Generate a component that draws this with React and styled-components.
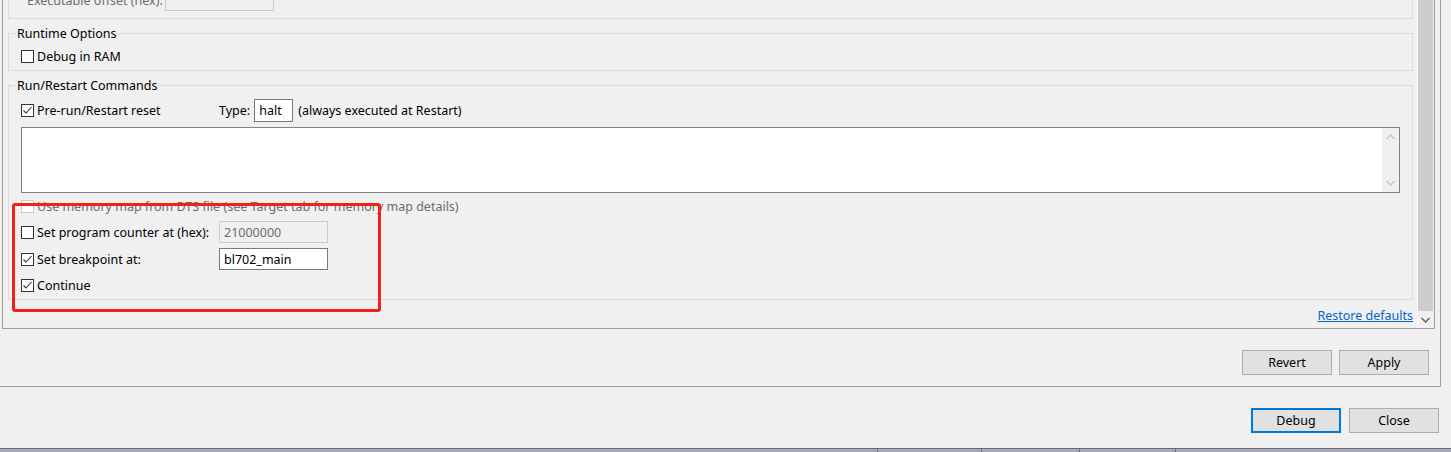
import React from 'react';
import styled, { createGlobalStyle } from 'styled-components';

const GlobalStyle = createGlobalStyle`
  html, body {
    margin: 0;
    padding: 0;
    background: #f0f0f0;
    overflow: hidden;
  }
  body {
    font-family: "Noto Sans", "Open Sans", sans-serif;
    font-size: 12.5px;
    color: #000;
  }
`;

const Page = styled.div`
  position: relative;
  width: 1451px;
  height: 452px;
  display: flex;
  flex-direction: column;
  background: #f0f0f0;
`;

const TabArea = styled.div`
  width: 1441px;
  box-sizing: border-box;
  border-right: 1px solid #a0a0a0;
  border-bottom: 1px solid #a0a0a0;
  padding-bottom: 11px;
`;

const Composite = styled.div`
  margin-left: 2px;
  width: 1433px;
  height: 329px;
  box-sizing: border-box;
  border: 1px solid #a0a0a0;
  border-top: none;
  display: flex;
  overflow: hidden;
`;

// scrolled content: the top of the first group is above the viewport
const Content = styled.div`
  flex: 1;
  min-width: 0;
  margin-top: -11px;
  padding: 0 4px 0 5px;
  display: flex;
  flex-direction: column;
`;

const Group = styled.fieldset`
  margin: 0 0 6px;
  padding: 0;
  min-width: 0;
  border: 1px solid #dcdcdc;
  ${p => p.$cut && 'border-top: none;'}
`;

const Legend = styled.legend`
  margin-left: 7px;
  padding: 0 1px;
  line-height: 16px;
  position: relative;
  top: 1px;
`;

const GroupBody = styled.div`
  padding: ${p => p.$top}px 12px ${p => p.$bottom}px;
  display: flex;
  flex-direction: column;
`;

const Row = styled.div`
  display: flex;
  align-items: center;
  height: ${p => p.$h}px;
  margin-top: ${p => p.$mt || 0}px;
`;

const LabelCell = styled.label`
  display: flex;
  align-items: center;
  gap: 3px;
  width: ${p => p.$w || 198}px;
  flex-shrink: 0;
  padding-left: ${p => p.$indent || 0}px;
  box-sizing: border-box;
  color: ${p => (p.$disabled ? '#6d6d6d' : '#000')};
  white-space: nowrap;
`;

const Box = styled.span`
  width: 13px;
  height: 13px;
  box-sizing: border-box;
  border: 1px solid ${p => (p.$disabled ? '#cccccc' : '#333333')};
  background: #fff;
  display: inline-flex;
  align-items: center;
  justify-content: center;
  flex-shrink: 0;
`;

const TextField = styled.input`
  width: ${p => p.$w}px;
  height: ${p => p.$h}px;
  box-sizing: border-box;
  margin: 0;
  padding: 0 0 0 4px;
  border: 1px solid ${p => (p.$disabled ? '#cccccc' : '#7a7a7a')};
  background: ${p => (p.$disabled ? '#f0f0f0' : '#fff')};
  color: ${p => (p.$disabled ? '#6d6d6d' : '#000')};
  font: inherit;
  outline: none;
`;

const TypeLabel = styled.span`
  margin-right: 4px;
`;

const Note = styled.span`
  margin-left: 5px;
  white-space: nowrap;
`;

const TextArea = styled.div`
  margin-top: 5px;
  height: 66px;
  box-sizing: border-box;
  border: 1px solid #828282;
  background: #fff;
  display: flex;
  justify-content: flex-end;
`;

const AreaScroll = styled.div`
  width: 17px;
  background: #f0f0f0;
  display: flex;
  flex-direction: column;
  justify-content: space-between;
  align-items: center;
  padding: 6px 0 6px;
`;

const RestoreRow = styled.div`
  display: flex;
  justify-content: flex-end;
  margin-top: 1px;
  line-height: 17px;
`;

const Link = styled.a`
  color: #0066cc;
  text-decoration: underline;
  cursor: pointer;
`;

const ScrollBar = styled.div`
  width: 17px;
  box-sizing: border-box;
  border-left: 1px solid #f7f7f7;
  padding-right: 1px;
  display: flex;
  flex-direction: column;
  flex-shrink: 0;
`;

const Thumb = styled.div`
  flex: 1;
  background: #cdcdcd;
`;

const ArrowBtn = styled.div`
  height: 17px;
  display: flex;
  align-items: center;
  justify-content: center;
`;

const ButtonRow = styled.div`
  display: flex;
  justify-content: flex-end;
  gap: ${p => p.$gap}px;
  margin-top: 21px;
  padding-right: ${p => p.$right}px;
`;

const Button = styled.button`
  width: 90px;
  height: 25px;
  box-sizing: border-box;
  margin: 0;
  padding: 0;
  background: #e1e1e1;
  border: ${p => (p.$default ? '2px solid #0078d7' : '1px solid #adadad')};
  font: inherit;
  color: #000;
`;

const TaskStrip = styled.div`
  margin-top: auto;
  height: 3px;
  border-top: 1px solid #6b6b6b;
  background: #a9abb8;
  position: relative;
`;

const StripSep = styled.span`
  position: absolute;
  top: 0;
  bottom: 0;
  width: 1px;
  background: #6e6e76;
`;

const Annotation = styled.div`
  position: absolute;
  left: 12px;
  top: 203px;
  width: 369px;
  height: 109px;
  box-sizing: border-box;
  border: 3px solid #f4201b;
  border-radius: 3px;
  pointer-events: none;
`;

const Check = ({ checked, disabled }) => (
  <Box $disabled={disabled}>
    {checked && (
      <svg width="11" height="11" viewBox="0 0 11 11">
        <path d="M1.5 5.5 L4 8 L9.5 2" fill="none" stroke="#333" strokeWidth="1.1" />
      </svg>
    )}
  </Box>
);

const Chevron = ({ up, color }) => (
  <svg width="9" height="6" viewBox="0 0 9 6">
    <polyline
      points={up ? '0.5,5 4.5,1 8.5,5' : '0.5,1 4.5,5 8.5,1'}
      fill="none"
      stroke={color}
      strokeWidth="1.4"
    />
  </svg>
);

const App = () => (
  <Page>
    <GlobalStyle />
    <TabArea>
      <Composite>
        <Content>
          <Group $cut>
            <GroupBody $top={0} $bottom={7}>
              <Row $h={22}>
                <LabelCell $w={144} $indent={6} $disabled>
                  Executable offset (hex):
                </LabelCell>
                <TextField $w={109} $h={22} $disabled readOnly defaultValue="" />
              </Row>
            </GroupBody>
          </Group>

          <Group>
            <Legend>Runtime Options</Legend>
            <GroupBody $top={4} $bottom={3}>
              <Row $h={22}>
                <LabelCell>
                  <Check />
                  Debug in RAM
                </LabelCell>
              </Row>
            </GroupBody>
          </Group>

          <Group>
            <Legend>Run/Restart Commands</Legend>
            <GroupBody $top={6} $bottom={4}>
              <Row $h={23}>
                <LabelCell>
                  <Check checked />
                  Pre-run/Restart reset
                </LabelCell>
                <TypeLabel>Type:</TypeLabel>
                <TextField $w={39} $h={23} readOnly defaultValue="halt" />
                <Note>(always executed at Restart)</Note>
              </Row>
              <TextArea>
                <AreaScroll>
                  <Chevron up color="#c5c5c5" />
                  <Chevron color="#c5c5c5" />
                </AreaScroll>
              </TextArea>
              <Row $h={20} $mt={3}>
                <LabelCell $disabled>
                  <Check disabled />
                  Use memory map from DTS file (see Target tab for memory map details)
                </LabelCell>
              </Row>
              <Row $h={22} $mt={5}>
                <LabelCell>
                  <Check />
                  Set program counter at (hex):
                </LabelCell>
                <TextField $w={109} $h={22} $disabled readOnly defaultValue="21000000" />
              </Row>
              <Row $h={22} $mt={5}>
                <LabelCell>
                  <Check checked />
                  Set breakpoint at:
                </LabelCell>
                <TextField $w={109} $h={22} readOnly defaultValue="bl702_main" />
              </Row>
              <Row $h={20} $mt={5}>
                <LabelCell>
                  <Check checked />
                  Continue
                </LabelCell>
              </Row>
            </GroupBody>
          </Group>

          <RestoreRow>
            <Link>Restore defaults</Link>
          </RestoreRow>
        </Content>

        <ScrollBar>
          <Thumb />
          <ArrowBtn>
            <Chevron color="#606060" />
          </ArrowBtn>
        </ScrollBar>
      </Composite>

      <ButtonRow $gap={7} $right={11}>
        <Button>Revert</Button>
        <Button>Apply</Button>
      </ButtonRow>
    </TabArea>

    <ButtonRow $gap={8} $right={12}>
      <Button $default>Debug</Button>
      <Button>Close</Button>
    </ButtonRow>

    <TaskStrip>
      {[877, 981, 1079, 1175].map(x => (
        <StripSep key={x} style={{ left: x }} />
      ))}
    </TaskStrip>

    <Annotation />
  </Page>
);

export default App;
